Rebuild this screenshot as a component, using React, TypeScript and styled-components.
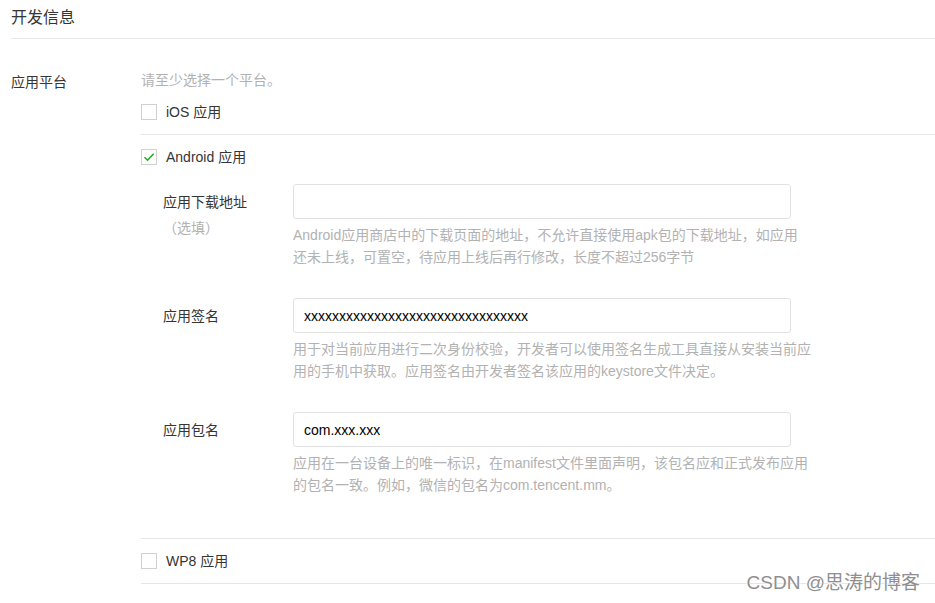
import React from 'react';
import styled, { createGlobalStyle } from 'styled-components';

const GlobalStyle = createGlobalStyle`
	html, body {
		margin: 0;
		padding: 0;
		background: #fff;
	}
	body {
		font-family: "Liberation Sans", "Noto Sans CJK SC", sans-serif;
		color: #353535;
		-webkit-font-smoothing: antialiased;
	}
`;

const Page = styled.div`
	position: relative;
	width: 935px;
	height: 603px;
	overflow: hidden;
	padding-left: 11px;
	box-sizing: border-box;
`;

const Title = styled.h2`
	margin: 0;
	padding: 8px 0 10px;
	font-size: 16px;
	font-weight: normal;
	line-height: 20px;
	border-bottom: 1px solid #e6e6ea;
`;

const Section = styled.div`
	display: grid;
	grid-template-columns: 130px 1fr;
	margin-top: 31px;
`;

const SectionLabel = styled.div`
	font-size: 14px;
	line-height: 20px;
	padding-top: 2px;
`;

const Hint = styled.div`
	font-size: 14px;
	line-height: 20px;
	color: #b2b2b2;
`;

const Option = styled.div<{ $first?: boolean; $last?: boolean }>`
	border-top: ${(p) => (p.$first ? 'none' : '1px solid #e6e6ea')};
	border-bottom: ${(p) => (p.$last ? '1px solid #e6e6ea' : 'none')};
	padding: 12px 0;
`;

const CheckRow = styled.label`
	display: flex;
	align-items: center;
	gap: 9px;
	font-size: 14px;
	line-height: 20px;
	color: #353535;
`;

const Box = styled.span`
	width: 16px;
	height: 16px;
	box-sizing: border-box;
	border: 1px solid #d1d1d1;
	background: #fff;
	display: flex;
	align-items: center;
	justify-content: center;
`;

const SubForm = styled.div`
	margin-top: 17px;
	padding-left: 22px;
`;

const Field = styled.div`
	display: grid;
	grid-template-columns: 130px 498px;
	margin-bottom: 30px;
`;

const FieldLabel = styled.div`
	font-size: 14px;
	line-height: 26px;
	padding-top: 5px;
`;

const Optional = styled.div`
	color: #b2b2b2;
`;

const Input = styled.input`
	display: block;
	width: 498px;
	height: 35px;
	box-sizing: border-box;
	border: 1px solid #e2e2e2;
	border-radius: 3px;
	padding: 0 10px;
	font-family: "Liberation Sans", "Noto Sans CJK SC", sans-serif;
	font-size: 14px;
	color: #000;
	outline: none;
`;

const Help = styled.div`
	margin-top: 5px;
	font-size: 14px;
	line-height: 22px;
	color: #b2b2b2;
	white-space: nowrap;
`;

const Watermark = styled.div`
	position: absolute;
	right: 15px;
	top: 572px;
	font-size: 19px;
	line-height: 22px;
	color: #8f8f8f;
	text-shadow: 0 0 2px #fff, 0 0 2px #fff, 0 0 1px #fff;
`;

const Check = () => (
	<svg width="12" height="10" viewBox="0 0 12 10">
		<path d="M1.5 5.2 L4.6 8.2 L10.6 1.8" fill="none" stroke="#1aad19" strokeWidth="1.5" />
	</svg>
);

const fields = [
	{
		label: '应用下载地址',
		optional: true,
		value: '',
		help: [
			'Android应用商店中的下载页面的地址，不允许直接使用apk包的下载地址，如应用',
			'还未上线，可置空，待应用上线后再行修改，长度不超过256字节',
		],
	},
	{
		label: '应用签名',
		value: 'xxxxxxxxxxxxxxxxxxxxxxxxxxxxxxxx',
		help: [
			'用于对当前应用进行二次身份校验，开发者可以使用签名生成工具直接从安装当前应',
			'用的手机中获取。应用签名由开发者签名该应用的keystore文件决定。',
		],
	},
	{
		label: '应用包名',
		value: 'com.xxx.xxx',
		help: [
			'应用在一台设备上的唯一标识，在manifest文件里面声明，该包名应和正式发布应用',
			'的包名一致。例如，微信的包名为com.tencent.mm。',
		],
	},
];

export default function App() {
	return (
		<Page>
			<GlobalStyle />
			<Title>开发信息</Title>
			<Section>
				<SectionLabel>应用平台</SectionLabel>
				<div>
					<Hint>请至少选择一个平台。</Hint>
					<Option $first>
						<CheckRow>
							<Box />
							iOS 应用
						</CheckRow>
					</Option>
					<Option>
						<CheckRow>
							<Box>
								<Check />
							</Box>
							Android 应用
						</CheckRow>
						<SubForm>
							{fields.map((f) => (
								<Field key={f.label}>
									<FieldLabel>
										{f.label}
										{f.optional && <Optional>（选填）</Optional>}
									</FieldLabel>
									<div>
										<Input defaultValue={f.value} />
										<Help>
											{f.help.map((line) => (
												<div key={line}>{line}</div>
											))}
										</Help>
									</div>
								</Field>
							))}
						</SubForm>
					</Option>
					<Option $last>
						<CheckRow>
							<Box />
							WP8 应用
						</CheckRow>
					</Option>
				</div>
			</Section>
			<Watermark>CSDN @思涛的博客</Watermark>
		</Page>
	);
}
